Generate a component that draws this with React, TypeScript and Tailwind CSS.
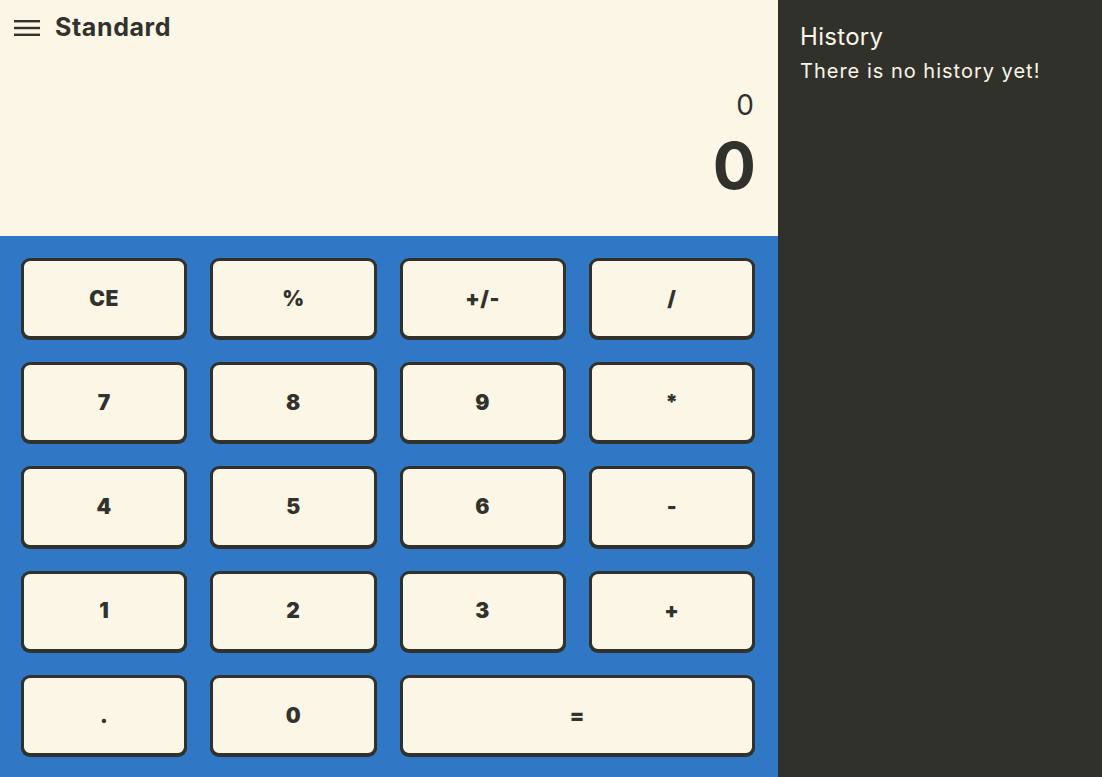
import React from "react";

const keys: { label: string; span?: boolean }[] = [
  { label: "CE" }, { label: "%" }, { label: "+/-" }, { label: "/" },
  { label: "7" }, { label: "8" }, { label: "9" }, { label: "*" },
  { label: "4" }, { label: "5" }, { label: "6" }, { label: "-" },
  { label: "1" }, { label: "2" }, { label: "3" }, { label: "+" },
  { label: "." }, { label: "0" }, { label: "=", span: true },
];

export default function App() {
  return (
    <div
      className="flex w-[1102px] h-[777px] overflow-hidden"
      style={{ fontFamily: "Inter, 'Noto Sans', sans-serif" }}
    >
      <div className="flex flex-col w-[778px] bg-[#fcf6e6]">
        <div className="h-[236px] flex flex-col">
          <div className="flex items-center h-[56px] pl-[14px] gap-[15px]">
            <svg width="26" height="16" viewBox="0 0 26 16">
              <rect x="0" y="0" width="26" height="2.4" fill="#32322c" />
              <rect x="0" y="6.8" width="26" height="2.4" fill="#32322c" />
              <rect x="0" y="13.6" width="26" height="2.4" fill="#32322c" />
            </svg>
            <span className="text-[25px] font-bold text-[#32322c] tracking-[0.6px]">Standard</span>
          </div>
          <div className="flex flex-col items-end pr-[23px] text-[#32322c]">
            <div className="text-[28px] leading-[36px] mt-[31px] mr-[1px]">0</div>
            <div className="text-[64px] font-bold leading-[56px] mt-[15px] -mr-[1px]">0</div>
          </div>
        </div>
        <div className="flex-1 bg-[#3077c6] pl-[21px] pr-[23px] pt-[22px] pb-[21px] grid grid-cols-4 grid-rows-5 gap-[23px]">
          {keys.map((k) => (
            <button
              key={k.label}
              className={`${k.span ? "col-span-2" : ""} bg-[#fcf6e6] border-[3px] border-[#32322c] rounded-[9px] shadow-[0_1px_0_#32322c] flex items-center justify-center text-[21px] font-black text-[#32322c] tracking-[0.5px]`}
            >
              {k.label}
            </button>
          ))}
        </div>
      </div>
      <div className="flex-1 bg-[#31312c] pl-[22px] pt-[21px] text-[#fcf6e6]">
        <div className="text-[24px] leading-[32px] tracking-[0.3px]">History</div>
        <div className="text-[20px] leading-[28px] mt-[4px] tracking-[1px]">There is no history yet!</div>
      </div>
    </div>
  );
}
